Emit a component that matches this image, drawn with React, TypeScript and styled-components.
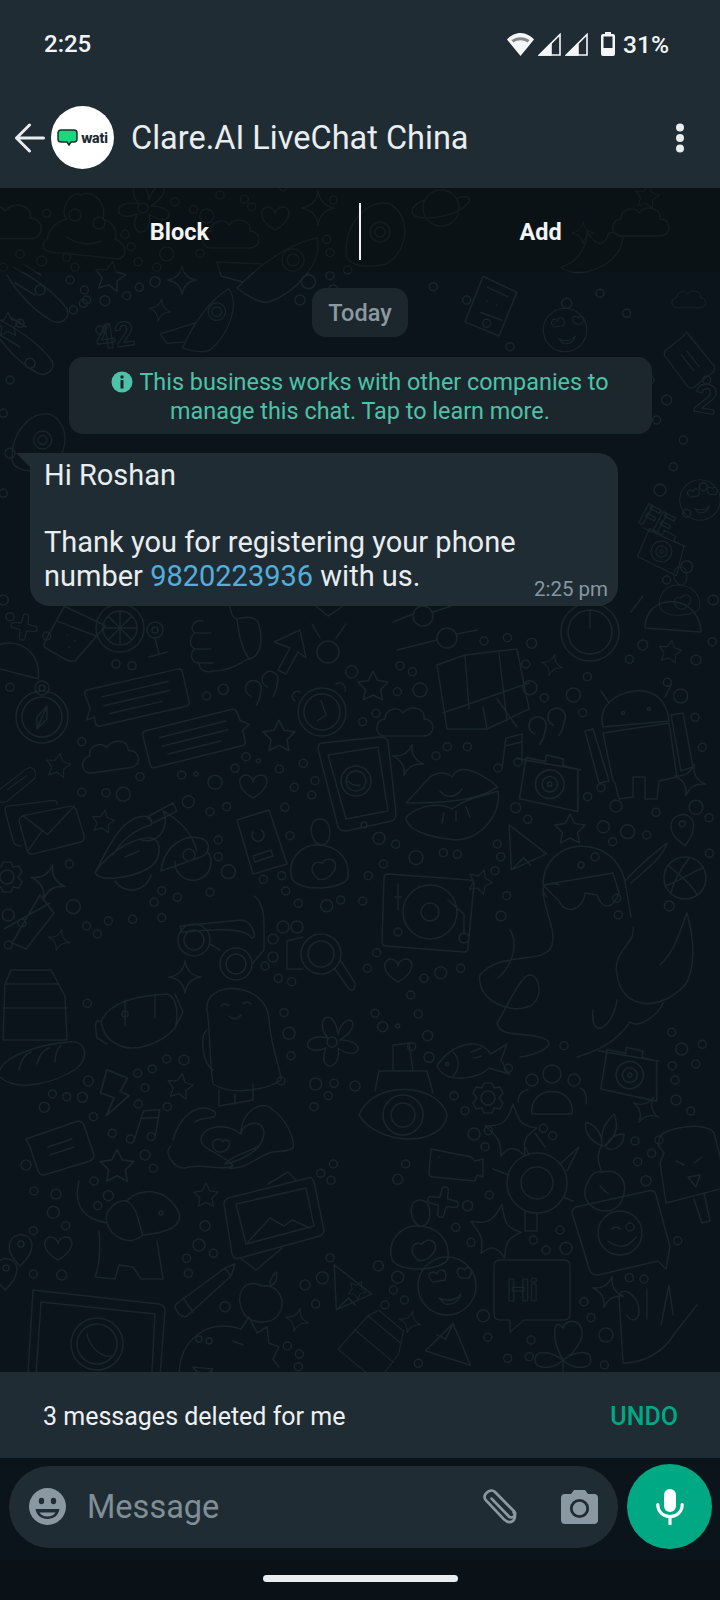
import React from "react";
import styled, { createGlobalStyle } from "styled-components";

const GlobalStyle = createGlobalStyle`
  html, body {
    margin: 0;
    padding: 0;
    background: #0a141a;
  }
  * {
    box-sizing: border-box;
  }
`;

// --- wallpaper doodles: every shape is one path string, centred on 0,0 ---

const c = (x: number, y: number, r: number) =>
  `M${x - r},${y}a${r},${r} 0 1,0 ${2 * r},0a${r},${r} 0 1,0 ${-2 * r},0`;

const starPath = (r: number) => {
  let d = "";
  for (let i = 0; i < 10; i++) {
    const rad = i % 2 ? r * 0.5 : r;
    const a = (Math.PI / 5) * i - Math.PI / 2;
    d += `${i ? "L" : "M"}${(rad * Math.cos(a)).toFixed(1)},${(rad * Math.sin(a)).toFixed(1)}`;
  }
  return d + "Z";
};

const sparkPath = (r: number) =>
  `M0,${-r}Q2,-2 ${r},0Q2,2 0,${r}Q-2,2 ${-r},0Q-2,-2 0,${-r}Z`;

const heart = "M0,12C-18,2 -15,-11 -7,-11C-3,-11 0,-7 0,-4C0,-7 3,-11 8,-11C16,-11 18,2 0,12Z";
const cloud = "M-22,13C-33,13 -33,-3 -22,-4C-22,-15 -8,-17 -4,-10C3,-19 19,-15 17,-4C29,-4 29,13 17,13Z";
const plus = "M-3,-14Q0,-17 3,-14L4,-4L14,-3Q17,0 14,3L4,4L3,14Q0,17 -3,14L-4,4L-14,3Q-17,0 -14,-3L-4,-4Z";
const chatLines = "M-34,-9H34M-34,0H34M-30,9H24";

const shapes: Record<string, string> = {
  star: starPath(16),
  spark: sparkPath(16),
  plus,
  heart,
  cloud,
  chatL: `M-46,-19H46Q50,-19 50,-15V15Q50,19 46,19H-42Q-46,19 -46,15V9L-54,10L-48,0L-50,-15Q-50,-19 -46,-19Z${chatLines}`,
  chatR: `M-46,-19H42Q46,-19 47,-15L48,-6L56,0L48,4V15Q48,19 44,19H-46Q-50,19 -50,15V-15Q-50,-19 -46,-19Z${chatLines}`,
  quotes: "M-12,4a8,8 0 1,1 10,-2q-1,6 -6,12M6,-2a8,8 0 1,1 10,-2q-1,6 -6,12",
  clock: `${c(0, 0, 24)}${c(0, 0, 18)}M-1,-11L4,3L-5,9M-22,-20a5,5 0 0,0 -5,9M14,-28a6,6 0 0,1 9,7`,
  compass: `${c(0, 0, 26)}${c(0, 0, 20)}${c(0, -29, 7)}${c(0, -29, 3)}M5,-11L-5,12L-5,0ZM5,-11L5,2L-5,12`,
  glass: "M-12,-24L32,-12L8,28Q4,30 -2,28L-24,20Q-26,18 -25,14ZM-16,-8L26,0M-4,4h.1M4,8h.1M0,16h.1",
  lemon: `${c(0, 0, 24)}${c(0, 0, 17)}M0,-17V17M-17,0H17M-12,-12L12,12M-12,12L12,-12`,
  pinRing: `${c(0, -10, 8)}${c(0, -10, 3)}M0,-2L4,14M-6,17L12,12`,
  fist: "M-24,-22C-34,-24 -38,-14 -32,-10C-38,-6 -38,4 -32,6C-38,10 -36,20 -28,20C-28,28 -20,30 -14,28C6,28 14,18 22,16C34,14 36,-4 32,-18C30,-28 18,-26 10,-24C2,-26 4,-40 0,-44M-32,-10H-16M-32,6H-16M-28,20H-14M10,-24C12,-8 14,4 22,16",
  arrow: "M-16,-8L10,-20L16,8L8,2L-4,24L-12,20L0,-2Z",
  figure: `${c(0, 22, 11)}M0,-14C-12,-24 -20,-30 -24,-34M0,-14C10,-20 20,-28 26,-34M-8,8L-16,-6M8,8L18,-6`,
  envelope: "M-36,-22L12,-28Q16,-28 16,-24M-36,-22Q-40,-22 -38,-14L-30,16Q-28,20 -22,20M-20,-12L30,-22Q34,-22 36,-18L44,8Q46,14 40,16L-8,28Q-14,30 -16,24L-24,-6Q-24,-10 -20,-12ZM-20,-12L6,8L34,-22M-14,24L0,4",
  scooter: `M-48,26C-30,-10 -20,-26 -4,-30C6,-32 10,-30 8,-22C-8,-18 -22,-6 -30,8M-48,26C-42,36 -10,30 4,22C16,16 20,0 12,-8C0,-12 -30,-2 -48,26ZM-18,10L-4,4M30,-44L4,-30L10,-24L34,-36ZM20,-36C28,-20 14,0 -4,-8M20,-36C42,-24 50,-10 54,4M18,24C22,-4 44,-14 60,-8C70,-2 64,8 58,10L18,24ZM32,14a18,18 0 1,0 32,-10${c(46, 8, 6)}M-28,34a20,20 0 0,0 36,-6`,
  book: `M-20,-18L12,-28L30,26L-4,36ZM-2,-24L12,-28M-4,-6a6,6 0 1,0 8,-2M-4,18L14,12L16,18L-2,24Z`,
  head: "M0,-26C14,-26 12,0 2,0C-10,0 -14,-26 0,-26ZM-28,34C-34,14 -18,0 -4,0C18,0 30,14 28,32C28,42 -16,50 -28,34ZM-2,34C-12,26 -8,14 2,18C8,10 20,16 14,26C10,32 4,36 -2,34Z",
  specs: `${c(-26, 10, 16)}${c(-26, 10, 10)}${c(16, 34, 16)}${c(16, 34, 10)}M-10,14L0,20M-40,-4L22,-10C32,-8 38,8 32,8C24,-4 -14,0 -38,2ZM34,-34C46,-26 44,-8 44,20L32,34`,
  paw: `${c(-44, -18, 5)}${c(-34, -30, 6)}${c(-20, -30, 6)}${c(-44, 0, 5)}${c(4, -3, 20)}${c(4, -3, 13)}M-14,-20L-30,-16V12H-14M18,12L32,32Q38,36 38,26L24,4`,
  carton: "M-28,-16L-22,-30H18L32,-4L34,40H-30ZM-28,-16H26M-30,8H34",
  saturn: `${c(-14, -14, 10)}${c(10, 8, 10)}M-44,-8L-24,-16M-4,-18L32,-30M-40,20L0,10M20,4L40,0`,
  powerBtn: `${c(0, 0, 29)}${c(0, 0, 22)}M0,-22V-4`,
  dome: "M-28,10C-28,-26 26,-26 28,14ZM-42,-6L-30,-22",
  map: "M-40,-28L-12,-38L40,-44L52,16L10,36L-30,36ZM-12,-38L-8,16M22,-40L30,28M-34,20L52,-10M10,36L6,14M20,6L40,34",
  android: `M-28,-34L-36,-46M28,-40L34,-52M-34,-10C-40,-32 -20,-44 -2,-46C18,-48 30,-36 32,-16ZM-34,-4L32,-14L40,40L22,44L20,62L8,62L8,40H-4V60L-18,62L-22,46L-24,44ZM-52,-6L-44,-8L-28,44L-38,46ZM34,-22L46,-24L56,30L44,34Z${c(-14, -24, 1.5)}${c(12, -28, 1.5)}`,
  camera: `M-24,-20L-6,-18V-24L10,-22V-16L24,-14L28,24L-26,18ZM-32,-18L26,-14${c(0, 2, 13)}${c(0, 2, 7)}${c(0, 2, 2)}`,
  music: `${c(-10, 16, 4)}${c(10, 10, 4)}M-6,16L-2,-14L14,-18L14,10M-3,-6L14,-10`,
  lips: "M-46,0L-22,-26C-10,-34 -2,-28 0,-26C6,-38 22,-36 46,-16C30,-6 12,0 -46,0ZM-46,14C-30,0 -10,0 0,6C16,-6 30,-6 46,-12C50,14 24,42 -4,36C-20,34 -46,28 -46,14ZM-12,-12C-4,-2 6,-8 10,-14M-8,10L-10,20M4,8V18M14,4L18,14",
  phone: `M-36,-40L22,-46Q28,-46 30,-42L38,30Q38,36 34,38L-12,48Q-18,48 -20,44L-40,-34Q-40,-40 -36,-40ZM-30,-28L20,-36L30,28L-12,36Z${c(-2, -2, 15)}${c(-2, -2, 10)}M-10,-2Q-4,4 2,2${c(6, 42, 3)}`,
  plane: "M-20,-22L22,0L-10,22ZM-10,22L0,8L8,14",
  turntable: `M-42,-38L40,-32Q44,-32 44,-28L38,36Q38,40 34,40L-44,34Q-48,34 -48,30L-46,-34Q-46,-38 -42,-38Z${c(0, 0, 27)}${c(0, 0, 9)}${c(-32, 20, 4)}M-32,-28V-2M-35,-15H-29M18,-12L34,2V22${c(34, 26, 5)}`,
  octopus: `M-40,-2C-40,-50 30,-56 42,-6L48,30M-40,-2L30,-14L36,6C30,22 20,24 14,8L2,6C0,24 -18,28 -24,14ZM42,-6C60,-26 74,-36 84,-44C80,-30 64,-18 48,-4M-36,10C-46,0 -36,-6 -24,-2${c(12, -30, 4)}${c(-2, -22, 3)}`,
  tentacles: "M543,893C546,915 556,930 552,945C546,966 500,950 480,975C476,1000 510,1015 530,1006C544,998 540,975 530,975C520,975 506,1010 497,1023C500,1040 530,1030 547,1040C556,1048 530,1056 520,1057M633,927C636,945 612,950 617,975C622,1010 660,1012 685,985C694,972 696,945 687,913C680,930 676,950 660,965M617,1000C612,1030 590,1040 593,1010M577,1057C600,1050 616,1042 630,1022C640,1030 660,1012 663,1003M510,930C520,945 510,968 498,978",
  ball: `${c(0, 0, 21)}M-16,-12C-4,-2 8,8 12,17M4,-20C-6,-6 -12,6 -14,14M18,-10C6,-6 -10,6 -20,8`,
  pin: `M0,18C-10,8 -12,2 -10,-6C-6,-16 10,-16 12,-4C12,6 6,12 0,18Z${c(1, -4, 3)}`,
  bread: "M-44,14C-46,-6 0,-18 26,-20C44,-22 46,-4 34,6C14,20 -26,32 -44,14ZM-24,8C-22,-2 -18,-8 -12,-10M-6,2C-4,-6 0,-12 6,-14M12,0C12,-6 14,-14 18,-16",
  backpack: `M-36,-8C-30,-24 -10,-34 30,-36C40,-34 42,-14 38,-2C24,14 -4,24 -20,14C-30,10 -34,2 -36,-8ZM-36,-8Q-44,-14 -40,8L-30,14M38,-36L46,-18L38,-2${c(-12, -16, 3)}M-12,-30V-4M18,-34V-12`,
  girl: `M-30,-30C-34,-60 30,-60 32,-20C34,8 44,30 44,40C30,50 -6,56 -24,44C-28,20 -26,-4 -30,-30ZM-30,-10C-38,-4 -34,24 -24,30M-18,50L-18,66L16,60V44M-2,54V64M-16,-34q4,-4 8,0M6,-36q4,-4 8,0M-8,-24q6,6 12,-1`,
  flower: `${c(0, 0, 5)}M-4,-4C-20,-22 2,-38 6,-8C14,-34 34,-18 8,-2C36,-2 28,22 6,6C10,30 -16,30 -6,6C-30,16 -32,-10 -4,-4Z`,
  bolt: "M-10,-18L8,-14L4,-2L12,0L-4,20L0,4L-12,2Z",
  card: "M-34,-8L18,-26Q22,-26 24,-22L34,8Q34,12 30,14L-16,28Q-20,28 -22,24L-30,0ZM-12,0L12,-8M-10,8L14,0",
  hands: "M-42,0C-34,-28 -14,-38 0,-28C4,-20 -12,-24 -20,-18M-44,6C-52,12 -42,28 -30,28C-14,22 6,32 18,26C10,14 -16,10 -14,-2C-10,-14 10,-18 26,-6C30,-22 54,-20 48,-2C44,14 20,22 10,24C16,16 34,12 44,6M26,-6C26,-28 46,-42 58,-30C70,-22 80,-2 78,8C68,14 56,10 52,14C40,18 30,30 14,28M0,0C4,-2 8,0 8,2C10,-2 16,0 14,6C12,12 4,14 0,10C-2,8 -4,2 0,0Z",
  dog: `M-64,-46C-70,-22 -60,-8 -36,-4M-36,-4C-40,-16 -26,-28 -16,-26C-4,-40 24,-40 36,-14C40,0 22,6 0,8C-14,20 -32,10 -36,-4ZM-16,-26C-4,-18 -4,0 0,8M-44,4C-42,28 -44,40 -48,50L-28,52L-24,38L-10,40L-2,52H20L14,14${c(18, -14, 2)}`,
  frame: "M-42,-22L38,-42Q42,-44 44,-38L54,10Q54,14 50,16L-30,38Q-36,40 -38,34L-46,-16Q-46,-20 -42,-22ZM-34,-16L36,-32L44,6L-24,24ZM-22,22L0,-2L14,6L22,0L40,8M26,-40L18,-48L-2,-36M-30,38L-14,50L12,28",
  pencil: "M-28,12L18,-22L28,-26L24,-14L-20,26Q-24,28 -28,24L-32,18Q-32,14 -28,12ZM-24,8L-14,22M18,-22L24,-14",
  apple: "M0,-16C-20,-26 -28,-4 -18,12C-12,22 12,24 18,10C24,-2 16,-18 0,-16ZM8,-18C8,-24 12,-28 14,-30C16,-24 14,-18 8,-16",
  tablet: `M-64,-40L62,-26Q68,-24 68,-20L62,60M-70,60L-64,-40M-56,-28L58,-16L54,60M-62,60L-56,-28${c(0, 14, 26)}${c(0, 14, 20)}M-10,4C-8,16 4,28 14,26`,
  dino: `${c(-24, -14, 3)}${c(-14, -12, 3)}M-44,24C-44,-16 -14,-34 18,-24L26,-36L34,-20L44,-26L46,-10L56,-6L50,6L56,14M-30,14C-24,24 -14,22 -10,16ZM10,-12L20,-8`,
  fish: `M-30,6C-16,-16 12,-24 24,-6L40,-16L34,0L42,14L22,8C10,20 -22,24 -30,6ZM-14,-8C-6,0 -8,10 -14,16M4,-8q6,-2 10,-4M6,-2q4,0 8,-2${c(-20, 4, 1.5)}`,
  sub: `M-44,0C-30,-36 36,-32 44,0C40,32 -24,32 -44,0Z${c(0, 0, 20)}${c(0, 0, 12)}M-28,-24L-24,-44L24,-44L30,-22M-10,-44V-70L6,-72L10,-44`,
  gear: `${c(0, 0, 7)}M-4,-15L4,-15L6,-10L12,-11L15,-5L11,0L15,5L12,11L6,10L4,15L-4,15L-6,10L-12,11L-15,5L-11,0L-15,-5L-12,-11L-6,-10Z`,
  people: `${c(0, -16, 9)}${c(-20, -10, 6)}${c(22, -10, 6)}M-20,24C-24,-6 24,-6 20,24ZM-34,12C-34,0 -24,0 -24,0M34,14C36,0 28,-2 28,-2`,
  cherry: `M-16,14C-24,36 10,50 20,28C28,8 16,-4 0,0C-10,-2 -12,6 -16,14ZM0,0C-6,-12 -4,-22 0,-26M-2,14L6,22M0,-26C-14,-32 -18,-42 -16,-50C-4,-46 0,-36 0,-26ZM0,-26C-2,-42 4,-50 12,-58C18,-44 12,-32 2,-26ZM4,-26C8,-36 16,-38 22,-38C22,-26 12,-20 4,-24`,
  popsicle: `M-28,-30C-24,-40 20,-46 26,-34L40,20L-22,36L-28,-4L-24,-14L-30,-22ZM6,32L14,56L22,54L16,26M-12,-6L-4,-2M14,-10L6,-4M0,10L12,8L8,20Z`,
  video: `M-22,-16L18,-8L22,-4L30,-6V12L24,10L22,16L-20,12Q-24,12 -24,8ZM-14,-8h.1`,
  turtle: `${c(0, 0, 30)}${c(0, 0, 16)}M-12,-36L-8,-28M8,-36L-2,-50M24,-20L42,-36L30,-12M-28,-8L-44,-14M-12,28V48H0V30M26,14L36,18`,
  starfish: "M0,-28C6,-10 8,-6 24,-4C12,4 10,8 12,24C2,14 -4,14 -12,24C-12,8 -16,4 -28,-6C-12,-6 -6,-8 0,-28Z",
  emojiBubble: `M-44,-26L28,-42Q34,-44 36,-38L50,14L46,36L38,28L-22,42Q-28,42 -30,38L-48,-20Q-48,-24 -44,-26Z${c(0, 0, 22)}M-8,-4q4,-4 8,0${c(10, -6, 4)}M-12,8Q4,20 16,4`,
  loveFace: `${c(0, 0, 29)}M-14,-4C-22,-10 -16,-18 -10,-12C-8,-20 2,-16 -2,-6ZM14,-8C6,-14 12,-22 18,-16C20,-22 28,-16 22,-8ZM-8,12Q6,18 14,8Q10,20 -2,18Z`,
  hiBubble: "M-32,-30H32Q38,-30 38,-24V24Q38,30 32,30H-8L-22,42V30H-32Q-38,30 -38,24V-24Q-38,-30 -32,-30Z",
  clover: "M0,10C-14,-14 -8,-34 0,-22C4,-34 24,-30 18,-10C12,2 4,8 0,10ZM0,10C-14,0 -28,0 -28,10C-28,20 -10,20 0,10ZM0,10C14,0 28,0 28,10C28,20 10,20 0,10ZM0,10V26",
  peace: "M-30,40L-34,-26C-34,-38 -14,-30 -14,-12C-14,0 -24,-2 -26,-8M-6,-4L-6,-34M8,2L16,-38L20,-8M22,10L44,-18M-30,40C-10,40 10,30 22,10",
  poop: `M-36,14C-46,24 -36,28 -22,28L36,34C46,30 42,18 32,14C36,6 28,-4 20,-6C24,-24 8,-36 -2,-30C-14,-36 -24,-12 -16,-6C-30,-2 -34,6 -36,14Z${c(-8, -10, 6)}${c(16, -2, 6)}M-16,12C-6,20 10,20 18,16`,
  planet: `${c(0, 0, 18)}M-16,-8C-28,-4 -32,4 -26,8C-12,14 20,6 28,-6C30,-12 24,-12 16,-10`,
  egg: `M-30,20C-30,-14 -4,-34 14,-28C38,-14 30,22 10,32C-6,36 -30,36 -30,20Z${c(4, 0, 10)}${c(4, 0, 5)}`,
  rocket: `M-40,20C-20,0 10,-24 40,-30C46,-6 20,24 -8,34C-16,36 -30,28 -40,20ZM-60,-6L-14,-4L-34,14L-56,8Z${c(16, -8, 11)}${c(16, -8, 6)}`,
  banana: "M-10,-24C-10,-4 -22,8 -36,12C-20,26 24,12 26,-18C22,-20 16,-24 12,-22C8,-10 0,-6 -10,-24Z",
  calc: `M-18,-28L18,-18L8,28L-28,20ZM-12,-18L10,-12M-10,-4h.1M0,-2h.1M-14,8L8,12`,
  hand: "M-32,-26C-20,-20 8,-4 22,16C26,26 14,34 4,26C-10,18 -28,0 -38,-18M-20,-28L-4,-18M-30,-10L-10,2",
  paperclip: "M-24,8L14,-14C24,-20 30,-6 22,0L-14,22C-26,26 -32,14 -24,8ZM-12,8L14,-6",
  boneCross: `M-26,4L20,-22M-18,18L10,-30L24,-12L-4,24Z${c(-8, -2, 4)}`,
};

// [shape, x, y, rotate, scale] in page coordinates
const motifs: [string, number, number, number?, number?][] = [
  ["plus", 24, 627, 10, 0.85], ["dome", 13, 660, 10], ["glass", 72, 632, 10], ["lemon", 120, 628],
  ["pinRing", 155, 640], ["fist", 227, 643], ["arrow", 290, 650], ["figure", 328, 630],
  ["compass", 42, 717], ["chatL", 137, 698, -13], ["chatR", 195, 738, -14], ["quotes", 262, 690, -10],
  ["clock", 322, 712], ["star", 279, 737, 0, 1.05], ["cloud", 112, 757, -8], ["star", 58, 766, 10, 0.8],
  ["paperclip", 16, 782, -8, 0.8], ["envelope", 42, 827, 0, 0.95], ["star", 103, 822, 10, 0.75],
  ["scooter", 143, 847], ["book", 257, 838], ["head", 320, 845], ["heart", 253, 786],
  ["gear", 7, 877], ["spark", 48, 882, 15, 1.1], ["boneCross", 30, 925], ["spark", 59, 940, 15, 0.7],
  ["specs", 220, 930], ["paw", 317, 957], ["spark", 185, 977], ["carton", 33, 1000],
  ["saturn", 437, 630], ["powerBtn", 590, 632], ["dome", 673, 618], ["map", 477, 693],
  ["spark", 552, 665, 15, 0.7], ["star", 373, 687], ["star", 670, 652, 10, 0.75], ["cloud", 407, 723],
  ["quotes", 547, 728, -6, 1.1], ["music", 508, 752], ["android", 637, 737], ["spark", 408, 760, 15],
  ["camera", 550, 782, 6, 1.1], ["spark", 690, 780, 15], ["lips", 452, 803], ["phone", 358, 783],
  ["plane", 525, 850, 10], ["star", 570, 830], ["pin", 682, 828, -10], ["turntable", 430, 912],
  ["star", 480, 882, 20, 0.8], ["octopus", 583, 887], ["tentacles", 0, 0], ["ball", 685, 878], ["heart", 398, 970],
  ["bread", 43, 1062], ["backpack", 137, 1030], ["girl", 237, 1040], ["flower", 332, 1042],
  ["bolt", 115, 1093, 10, 1.2], ["star", 180, 1087, 10, 0.85], ["music", 143, 1125, 10], ["card", 60, 1147],
  ["star", 117, 1167, 0, 1.1], ["hands", 215, 1140], ["dog", 143, 1227], ["star", 206, 1196, 0, 0.8],
  ["frame", 270, 1220], ["heart", 58, 1248], ["pin", 20, 1248], ["pin", 5, 1272],
  ["pencil", 207, 1290], ["apple", 262, 1302], ["spark", 297, 1320, 15, 0.75], ["tablet", 97, 1330],
  ["dino", 223, 1353], ["plane", 350, 1290, 10], ["fish", 467, 1060], ["sub", 403, 1115],
  ["gear", 488, 1098], ["people", 552, 1090], ["camera", 630, 1073, 6, 1.05], ["cherry", 602, 1172],
  ["popsicle", 688, 1167], ["spark", 646, 1110, 30, 0.9], ["starfish", 513, 1132], ["video", 453, 1165],
  ["turtle", 537, 1183], ["plus", 443, 1202, 10], ["head", 420, 1226], ["starfish", 497, 1232, 10],
  ["emojiBubble", 620, 1233], ["loveFace", 447, 1286], ["hiBubble", 532, 1290], ["spark", 608, 1292, 15],
  ["peace", 653, 1323], ["clover", 563, 1350], ["spark", 410, 1322, 15, 0.7], ["carton", 377, 1340, 40, 0.8],
  ["plane", 447, 1347, 170], ["star", 357, 1290, 30, 0.6],
  ["cloud", 10, 223, 0, 1.2], ["poop", 83, 225], ["flower", 143, 208], ["heart", 275, 218],
  ["spark", 318, 208, 0, 1.05], ["cloud", 233, 235], ["rocket", 277, 268], ["star", 110, 277, 10],
  ["spark", 182, 280, 0, 0.9], ["hand", 45, 293], ["planet", 441, 208], ["egg", 376, 232],
  ["star", 647, 197, 10, 0.8], ["cloud", 643, 223], ["spark", 583, 233, 0, 0.7], ["banana", 597, 255],
  ["calc", 496, 307, 10], ["loveFace", 565, 330, 0, 0.75], ["rocket", 207, 322, -20, 0.8], ["spark", 160, 310, 10, 0.7],
  ["hand", 30, 345], ["egg", 39, 440, 0, 0.9], ["card", 690, 360, 70, 0.8], ["loveFace", 700, 500, 0, 0.7],
  ["camera", 662, 550, 20, 0.8], ["head", 680, 585, 0, 0.7], ["star", 8, 325, 0, 0.8], ["cloud", 690, 300, 0, 0.6],
];

// ring dots: [originX, originY, [x, y, r?] as read off a 3x crop]
const dotGroups: [number, number, number[][]][] = [
  [0, 600, [[140,108],[30,262],[245,425],[420,530],[245,577],[318,578],[370,583,7],[545,525],[588,522,2],[645,547,7],[705,505],[738,470],[775,483,2],[838,507],[910,490],[883,562],[945,542],[935,585],[565,605,6],[630,635],[680,620],[855,622],[870,707],[655,720],[655,770],[685,815,7],[790,838],[845,827],[857,873],[895,910],[980,917,6],[1022,900],[630,877],[485,872],[532,892],[462,907],[485,953],[398,958],[325,963],[260,978],[292,1002],[220,920,7],[208,792],[25,945,6],[25,1035],[795,1098],[835,1135],[875,1145],[620,288],[670,268,5],[1055,215,6],[348,192],[396,197]]],
  [360, 600, [[120,197],[157,215],[112,275],[180,270,7],[48,340],[8,365],[262,440],[322,440],[228,467],[372,123],[442,113],[515,130,5],[497,192],[510,263,7],[553,293],[640,285,7],[682,230],[668,338],[808,178],[848,135,5],[1008,180,5],[1057,125],[922,247],[962,288,7],[1005,352],[1027,442],[723,563],[683,590],[768,618,6],[888,637],[1008,622,7],[1047,653],[730,680,6],[803,695,7],[860,705],[758,725],[467,623,5],[503,658],[412,732],[422,770],[405,812],[57,715,6],[107,733],[168,773,7],[250,758],[292,763],[70,792],[25,827],[8,903],[440,887],[423,948,5],[770,895],[775,945],[928,918,5],[1048,760],[50,1058],[22,1105],[192,1135],[242,1118,6],[302,1105],[152,1185]]],
  [0, 1000, [[262,10],[852,38],[867,100,6],[873,167],[500,177],[552,180,5],[457,207],[413,220],[435,263],[265,243,5],[157,282],[200,290],[247,292,5],[133,322,5],[415,312],[502,320],[280,350],[337,400],[78,495,5],[435,465,5],[460,505],[282,543],[102,573],[168,582,5],[325,587,5],[293,617],[160,637,6],[197,677],[100,692],[615,677,5],[597,735,6],[640,760],[560,775],[565,820],[185,825,5],[100,822],[675,920,5],[843,243],[947,252,6],[1002,250],[1065,258,5],[985,287],[942,320],[1000,492],[962,520],[993,541],[990,773],[967,833,6],[915,855,5],[947,912],[862,1038],[898,1062],[895,1100]]],
  [360, 1000, [[45,40],[175,42],[68,80,5],[113,78,2],[203,107,5],[155,140],[207,172,5],[445,205],[612,137],[935,97],[965,147,6],[1027,133],[1007,192],[937,197],[945,240],[948,300,5],[992,333],[282,287],[315,332],[342,402,6],[385,392],[375,440],[550,385],[578,407],[825,423],[897,420],[875,460],[833,485],[858,542,5],[137,492],[113,538,5],[388,585],[323,617,5],[287,682],[333,727],[520,720],[558,750],[618,745,6],[600,690],[953,722],[55,798,5],[113,832,6],[100,870],[75,915],[133,900],[370,947,6],[383,1012],[672,905],[693,953],[738,1005,7],[513,1020],[443,1075],[508,1070],[733,1095],[175,1090],[808,833],[852,837]]],
  [0, 180, [[140,100],[375,163],[393,200],[500,222,7],[600,220],[415,245],[470,262],[225,262],[200,232],[125,243,5],[60,222],[10,262],[525,65],[580,88],[620,108,7],[660,45],[733,58],[755,80],[980,178],[990,218],[1043,270],[990,287],[210,300],[465,305,5],[418,322],[253,330],[380,347],[315,362,5],[925,305,7],[250,370],[850,20],[1000,60]]],
  [0, 280, [[220,90],[260,60],[300,150],[120,30,5],[60,130],[900,60,5],[950,120],[1040,90],[1000,30,5],[1400,60],[1460,130],[1530,200],[30,300],[90,250,5],[1950,300],[2000,360,5],[1970,420],[2050,480],[2020,560],[1980,630,6],[2060,700],[2120,300],[2110,620],[10,400],[30,520,5],[10,640],[2000,900],[2060,860,6],[2140,960,5],[10,960,5],[30,1010],[1300,20],[1800,40],[1880,100],[1700,70,5]]],
];

const WallpaperSvg = styled.svg`
  position: absolute;
  left: 0;
  top: 188px;
  width: 720px;
  height: 1372px;
  fill: none;
  stroke: #1a252b;
  stroke-width: 1.5;
  stroke-linejoin: round;
  stroke-linecap: round;
`;

const DoodleText = styled.text`
  font-family: "Roboto", sans-serif;
  font-weight: 700;
  stroke: #1a252b;
  stroke-width: 1.2;
  fill: none;
`;

const Wallpaper = () => (
  <WallpaperSvg viewBox="0 188 720 1372" aria-hidden="true">
    {motifs.map(([name, x, y, r = 0, s = 1], i) => (
      <path key={i} d={shapes[name]} transform={`translate(${x} ${y}) rotate(${r}) scale(${s})`} />
    ))}
    {dotGroups.map(([ox, oy, dots], g) =>
      dots.map(([x, y, r = 4], i) => (
        <circle key={`${g}-${i}`} cx={ox + x / 3} cy={oy + y / 3} r={r} />
      ))
    )}
    <DoodleText x="96" y="348" fontSize="34" transform="rotate(-8 110 340)">42</DoodleText>
    <DoodleText x="694" y="412" fontSize="40" transform="rotate(10 700 400)">2</DoodleText>
    <DoodleText x="640" y="530" fontSize="30" transform="rotate(28 655 520)">FF</DoodleText>
    <DoodleText x="507" y="1301" fontSize="32">Hi</DoodleText>
  </WallpaperSvg>
);

// --- page ---

const Page = styled.div`
  position: relative;
  width: 720px;
  height: 1600px;
  overflow: hidden;
  display: flex;
  flex-direction: column;
  background: #0a141a;
  font-family: "Roboto", sans-serif;
  color: #e9edef;
`;

const Header = styled.header`
  position: relative;
  height: 188px;
  flex: none;
  background: #202c33;
  display: flex;
  flex-direction: column;
`;

const StatusBar = styled.div`
  height: 88px;
  padding: 0 51px 0 44px;
  display: flex;
  align-items: center;
  justify-content: space-between;
  font-size: 24px;
  font-weight: 500;
  color: #f1f3f4;
`;

const StatusIcons = styled.div`
  display: flex;
  align-items: center;
  gap: 4px;
`;

const BatteryGlyph = styled.svg`
  margin-left: 9px;
`;

const BatteryText = styled.span`
  margin-left: 4px;
  font-size: 24.5px;
`;

const Toolbar = styled.div`
  height: 99px;
  padding: 0 35px 0 15px;
  display: flex;
  align-items: center;
`;

const Avatar = styled.div`
  width: 63px;
  height: 63px;
  margin-left: 6px;
  border-radius: 50%;
  background: #fff;
  display: flex;
  align-items: center;
  justify-content: center;
  gap: 3px;
`;

const AvatarText = styled.span`
  font-family: "Inter", "Roboto", sans-serif;
  font-size: 13px;
  font-weight: 800;
  letter-spacing: -0.2px;
  color: #1d2b2f;
`;

const Title = styled.div`
  flex: 1;
  margin-left: 17px;
  font-size: 32.5px;
  color: #e9edef;
`;

const ActionBar = styled.div`
  position: relative;
  height: 84px;
  flex: none;
  display: grid;
  grid-template-columns: 1fr 2px 1fr;
  align-items: center;
  background: rgba(13, 16, 18, 0.4);
`;

const ActionLabel = styled.div`
  text-align: center;
  font-size: 23.5px;
  font-weight: 700;
  color: #f2f4f5;
  padding-top: 4px;
`;

const Divider = styled.div`
  height: 57px;
  background: #f2f4f5;
  margin-top: 3px;
`;

const Thread = styled.main`
  position: relative;
  flex: 1;
  display: flex;
  flex-direction: column;
  align-items: center;
  padding-top: 16px;
`;

const DatePill = styled.div`
  width: 96px;
  height: 49px;
  border-radius: 14px;
  background: #1c272d;
  color: #8c99a1;
  font-size: 23.5px;
  font-weight: 500;
  display: flex;
  align-items: center;
  justify-content: center;
`;

const Notice = styled.div`
  width: 583px;
  height: 77px;
  margin-top: 20px;
  padding-top: 11px;
  border-radius: 14px;
  background: #1c272d;
  color: #4dc2a8;
  font-size: 23.4px;
  line-height: 28.5px;
  text-align: center;
`;

const InfoIcon = styled.svg`
  width: 22px;
  height: 22px;
  margin-right: 6px;
  vertical-align: -3px;
`;

const Bubble = styled.div`
  position: relative;
  align-self: flex-start;
  width: 588px;
  height: 153px;
  margin: 19px 0 0 30px;
  padding: 5px 14px 0;
  border-radius: 0 20px 20px 20px;
  background: #202c33;
  font-size: 29px;
  line-height: 34.5px;
  color: #e9edef;
  &::before {
    content: "";
    position: absolute;
    left: -14px;
    top: 0;
    border-top: 14px solid #202c33;
    border-left: 14px solid transparent;
  }
`;

const MessageLine = styled.div<{ $gap?: boolean }>`
  margin-top: ${(p) => (p.$gap ? "32px" : "0")};
`;

const PhoneLink = styled.span`
  color: #53aedb;
`;

const Timestamp = styled.span`
  position: absolute;
  right: 10px;
  bottom: 5px;
  font-size: 20.5px;
  line-height: 24px;
  color: #8696a0;
`;

const Snackbar = styled.div`
  position: relative;
  flex: none;
  height: 86px;
  padding: 2px 42px 0 43px;
  background: #202c33;
  display: flex;
  align-items: center;
  justify-content: space-between;
  font-size: 25px;
  color: #eef0f1;
`;

const UndoButton = styled.span`
  font-weight: 500;
  color: #00a884;
  font-size: 25px;
`;

const Composer = styled.div`
  position: relative;
  flex: none;
  margin-top: 6px;
  padding: 0 8px 11px 9px;
  display: flex;
  align-items: center;
  gap: 9px;
`;

const InputPill = styled.div`
  flex: 1;
  height: 82px;
  border-radius: 41px;
  padding: 0 20px;
  background: #202c33;
  display: flex;
  align-items: center;
  font-size: 32.5px;
  color: #7f8e97;
`;

const Placeholder = styled.span`
  flex: 1;
  margin-left: 21px;
`;

const IconSlot = styled.svg<{ $gap?: number }>`
  flex: none;
  margin-left: ${(p) => p.$gap ?? 0}px;
`;

const MicButton = styled.div`
  width: 85px;
  height: 85px;
  flex: none;
  border-radius: 50%;
  background: #00a884;
  display: flex;
  align-items: center;
  justify-content: center;
`;

const NavBar = styled.div`
  position: relative;
  flex: none;
  height: 40px;
  padding-top: 15px;
  background: #0a1217;
  display: flex;
  justify-content: center;
`;

const HomeIndicator = styled.div`
  width: 195px;
  height: 7px;
  border-radius: 4px;
  background: #e9edef;
`;

export default function App() {
  return (
    <>
      <GlobalStyle />
      <Page>
        <Wallpaper />
        <Header>
          <StatusBar>
            <span>2:25</span>
            <StatusIcons>
              <svg width="27" height="23" viewBox="0 0 27 23" fill="#f5f6f7">
                <path d="M13.5 23L0 6.5C3 3 8 0 13.5 0S24 3 27 6.5Z" />
                <path d="M4.5 7.2C7 5.2 10 4.2 13.5 4.2s6.500 1 9 3L20.500 9.500C18.500 8 16 7.300 13.500 7.300S8.500 8 6.500 9.500Z" fill="#202c33" opacity=".55" />
              </svg>
              <svg width="23" height="23" viewBox="0 0 23 23" fill="none" stroke="#f5f6f7" strokeWidth="1.6">
                <path d="M22 1.500V22H1.500Z" />
                <path d="M13 22V11L2 22Z" fill="#f5f6f7" />
              </svg>
              <svg width="23" height="23" viewBox="0 0 23 23" fill="none" stroke="#f5f6f7" strokeWidth="1.6">
                <path d="M22 1.500V22H1.500Z" />
                <path d="M13 22V11L2 22Z" fill="#f5f6f7" />
              </svg>
              <BatteryGlyph width="14" height="24" viewBox="0 0 14 24" fill="#f5f6f7">
                <path fillRule="evenodd" d="M4 0h6v2h2a2 2 0 0 1 2 2v18a2 2 0 0 1-2 2H2a2 2 0 0 1-2-2V4a2 2 0 0 1 2-2h2ZM2.500 4.500V16h9V4.500Z" />
              </BatteryGlyph>
              <BatteryText>31%</BatteryText>
            </StatusIcons>
          </StatusBar>
          <Toolbar>
            <svg width="30" height="30" viewBox="0 0 30 30" fill="none" stroke="#e9edef" strokeWidth="3" strokeLinecap="round" strokeLinejoin="round">
              <path d="M28.500 15H2M14.500 2L1.500 15l13 13" />
            </svg>
            <Avatar>
              <svg width="21" height="17" viewBox="0 0 21 17">
                <path d="M4 1h13a3 3 0 0 1 3 3v6a3 3 0 0 1-3 3h-3l-2 3-2-3H4a3 3 0 0 1-3-3V4a3 3 0 0 1 3-3Z" fill="#1ed47d" stroke="#17302a" strokeWidth="1.500" />
              </svg>
              <AvatarText>wati</AvatarText>
            </Avatar>
            <Title>Clare.AI LiveChat China</Title>
            <svg width="10" height="30" viewBox="0 0 10 30" fill="#e9edef">
              <circle cx="5" cy="4.500" r="4" />
              <circle cx="5" cy="15" r="4" />
              <circle cx="5" cy="25.500" r="4" />
            </svg>
          </Toolbar>
        </Header>
        <ActionBar>
          <ActionLabel>Block</ActionLabel>
          <Divider />
          <ActionLabel>Add</ActionLabel>
        </ActionBar>
        <Thread>
          <DatePill>Today</DatePill>
          <Notice>
            <InfoIcon viewBox="0 0 22 22">
              <circle cx="11" cy="11" r="10.500" fill="#4dc2a8" />
              <circle cx="11" cy="6" r="1.700" fill="#1c272d" />
              <rect x="9.500" y="9" width="3" height="8.500" fill="#1c272d" />
            </InfoIcon>
            This business works with other companies to
            <br />
            manage this chat. Tap to learn more.
          </Notice>
          <Bubble>
            <MessageLine>Hi Roshan</MessageLine>
            <MessageLine $gap>Thank you for registering your phone</MessageLine>
            <MessageLine>
              number <PhoneLink>9820223936</PhoneLink> with us.
            </MessageLine>
            <Timestamp>2:25 pm</Timestamp>
          </Bubble>
        </Thread>
        <Snackbar>
          <span>3 messages deleted for me</span>
          <UndoButton>UNDO</UndoButton>
        </Snackbar>
        <Composer>
          <InputPill>
            <svg width="37" height="37" viewBox="0 0 37 37">
              <circle cx="18.500" cy="18.500" r="18.500" fill="#8a98a1" />
              <ellipse cx="12.500" cy="13" rx="2.700" ry="3.300" fill="#202c33" />
              <ellipse cx="24.500" cy="13" rx="2.700" ry="3.300" fill="#202c33" />
              <path d="M6.500 21h24c-1 6.500-6 10-12 10s-11-3.500-12-10Z" fill="#202c33" />
              <path d="M10.500 24.500h16c-1.500 2.800-4.500 4-8 4s-6.500-1.200-8-4Z" fill="#8a98a1" />
            </svg>
            <Placeholder>Message</Placeholder>
            <IconSlot width="42" height="38" viewBox="0 0 40 36" fill="none" stroke="#8a98a1" strokeWidth="2.600" strokeLinecap="round">
              <path d="M13 9l16.500 17c3 3 8 -1.500 4.800 -5L16 2.500c-4-4-13 3-8.500 8L25 29c6.500 6 13-1 9-7" transform="translate(-1 1)" />
            </IconSlot>
            <IconSlot $gap={40} width="37" height="34" viewBox="0 0 37 34">
              <path d="M4 4h6l3-4h11l3 4h6a4 4 0 0 1 4 4v22a4 4 0 0 1-4 4H4a4 4 0 0 1-4-4V8a4 4 0 0 1 4-4Z" fill="#8a98a1" />
              <circle cx="18.500" cy="18.500" r="8.200" fill="none" stroke="#202c33" strokeWidth="2.800" />
            </IconSlot>
          </InputPill>
          <MicButton>
            <svg width="28" height="36" viewBox="0 0 28 36" fill="none" stroke="#fff" strokeWidth="3.200" strokeLinecap="round">
              <rect x="8" y="0" width="12" height="23" rx="6" fill="#fff" stroke="none" />
              <path d="M1.800 15.500c0 7.500 5.500 12 12.200 12s12.200-4.500 12.200-12M14 27.500V35" />
            </svg>
          </MicButton>
        </Composer>
        <NavBar>
          <HomeIndicator />
        </NavBar>
      </Page>
    </>
  );
}
